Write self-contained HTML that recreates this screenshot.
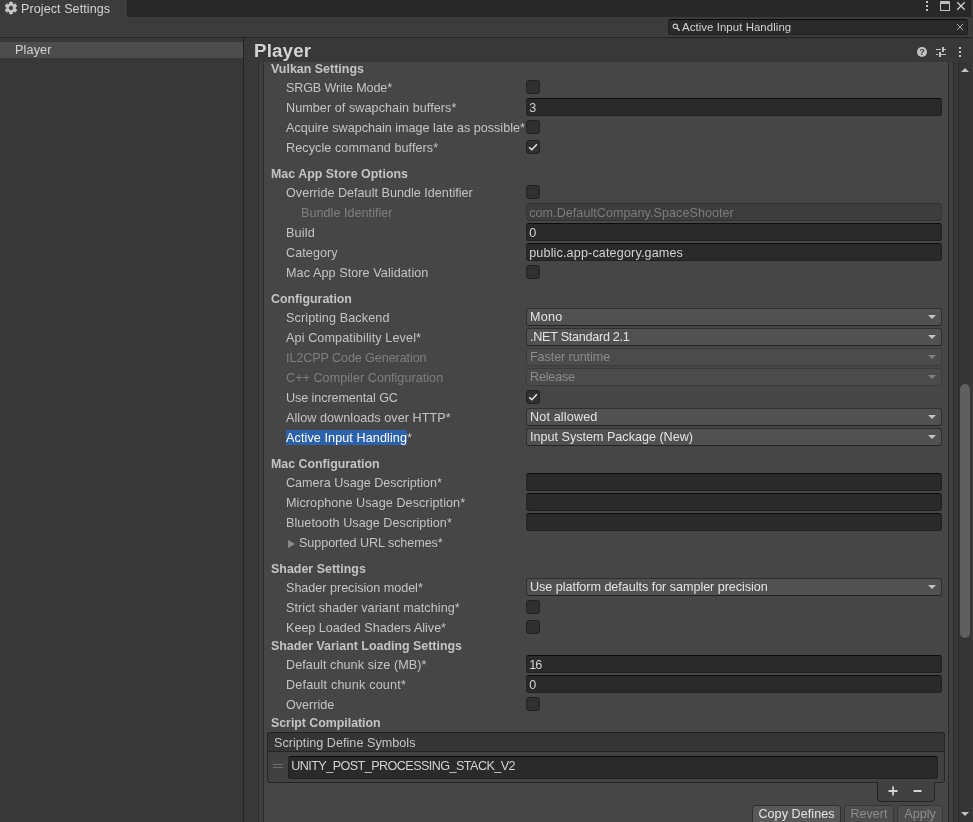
<!DOCTYPE html>
<html><head><meta charset="utf-8"><title>Project Settings</title>
<style>
*{box-sizing:border-box;margin:0;padding:0}
html,body{width:973px;height:822px;overflow:hidden;background:#383838}
#root{position:absolute;left:0;top:0;width:973px;height:822px;overflow:hidden;will-change:transform;font-family:"Liberation Sans",sans-serif;font-size:12.6px;color:#c4c4c4}
div,i{position:absolute;white-space:nowrap}
#tabbar{left:0;top:0;width:973px;height:17px;background:#282828}
#tab{left:0;top:0;width:127px;height:17px;background:#3c3c3c}
#tabtxt{left:21px;top:1px;line-height:17px;color:#d2d2d2}
#toolbar{left:0;top:17px;width:973px;height:20px;background:#3c3c3c}
#tline{left:0;top:37px;width:971px;height:1px;background:#232323}
#search{left:668px;top:19px;width:300px;height:16px;background:#2a2a2a;border:1px solid #212121;border-top-color:#0d0d0d;border-radius:3px}
#stext{left:682px;top:19px;line-height:16px;font-size:11.4px;color:#d2d2d2}
#left{left:0;top:38px;width:243px;height:784px;background:#383838}
#sel{left:0;top:42px;width:243px;height:16px;background:#4d4d4d}
#seltxt{left:15px;top:42px;line-height:16px;color:#d2d2d2}
#split{left:243px;top:38px;width:1px;height:784px;background:#232323}
#title{left:254px;top:39px;line-height:24px;font-size:18.8px;font-weight:bold;color:#d2d2d2}
#box1{left:258px;top:62px;width:696px;height:770px;background:#3f3f3f;border:1px solid #2a2a2a;border-top:none}
#box2{left:263px;top:62px;width:686px;height:770px;background:#464646;border:1px solid #2a2a2a;border-top:none}
#strack{left:958px;top:62px;width:13px;height:760px;background:#353535;border-left:1px solid #303030}
#thumb{left:960px;top:384px;width:10px;height:254px;background:#5f5f5f;border-radius:5px}
#redge{left:971px;top:0;width:2px;height:822px;background:#383838}
.h{left:271px;line-height:18px;font-weight:bold;font-size:12.4px;color:#c4c4c4}
.l{line-height:18px;color:#c4c4c4}
.l.dis{color:#7f7f7f}
.c{left:526px;width:14px;height:14px;background:#303030;border:1px solid #212121;border-radius:3px}
.c svg{position:absolute;left:-1px;top:-1px}
.f{left:526px;width:416px;height:18px;background:#2a2a2a;border:1px solid #212121;border-top-color:#0d0d0d;border-radius:3px;line-height:18px;padding-left:2.2px;color:#d2d2d2}
.d span{position:relative;top:-1px}
.f.dis{background:#3d3d3d;border-color:#343434;color:#7c7c7c}
.d{left:526px;width:416px;height:18px;background:#515151;border:1px solid #303030;border-bottom-color:#242424;border-radius:3px;line-height:18px;padding-left:3px;color:#e4e4e4}
.d.dis{background:#4b4b4b;border-color:#3b3b3b;color:#8b8b8b}
.d i{right:5px;top:6px;width:0;height:0;border-left:4px solid transparent;border-right:4px solid transparent;border-top:4.5px solid #c4c4c4}
.d.dis i{border-top-color:#7f7f7f}
.hl{background:#2c62ab;color:#fff;padding-top:1.4px}
.tri{display:inline-block;position:relative;width:0;height:0;border-top:4.5px solid transparent;border-bottom:4.5px solid transparent;border-left:7.5px solid #8a8a8a;margin:0 4px 0 2px;top:0.5px}
#list{left:267px;top:732px;width:678px;height:51px;background:#414141;border:1px solid #242424;border-radius:3px}
#lhead{left:267px;top:732px;width:678px;height:20px;background:#353535;border:1px solid #242424;border-radius:3px 3px 0 0}
#lheadtxt{left:274px;top:734px;line-height:18px}
#linput{left:288px;top:756px;width:650px;height:23px;background:#2a2a2a;border:1px solid #212121;border-top-color:#0d0d0d;border-radius:3px;line-height:18px;padding-left:2.2px;color:#d2d2d2}
.grip{left:273px;width:10px;height:1px;background:#6e6e6e}
#lfoot{left:877px;top:782px;width:58px;height:20px;background:#414141;border:1px solid #242424;border-top:none;border-radius:0 0 4px 4px}
.dot{width:2px;height:2px;background:#c4c4c4}
.btn{top:805px;height:20px;background:#585858;border:1px solid #303030;border-radius:3px;line-height:17px;text-align:center;color:#e4e4e4}
.btn.dis{background:#4d4d4d;border-color:#383838;color:#8d8d8d}
</style></head><body><div id="root">
<div id="tabbar"></div><div id="tab"></div>
<svg style="position:absolute;left:4px;top:1px" width="14" height="14" viewBox="0 0 14 14"><path fill="#c8c8c8" fill-rule="evenodd" stroke="#c8c8c8" stroke-width="0.6" stroke-linejoin="round" d="M5.41 2.79 L5.55 1.07 L8.45 1.07 L8.59 2.79 L9.85 3.52 L11.41 2.78 L12.86 5.29 L11.44 6.27 L11.44 7.73 L12.86 8.71 L11.41 11.22 L9.85 10.48 L8.59 11.21 L8.45 12.93 L5.55 12.93 L5.41 11.21 L4.15 10.48 L2.59 11.22 L1.14 8.71 L2.56 7.73 L2.56 6.27 L1.14 5.29 L2.59 2.78 L4.15 3.52Z M4.6 7a2.4 2.4 0 1 0 4.8 0a2.4 2.4 0 1 0 -4.8 0z"/></svg>
<div id="tabtxt"><span style="letter-spacing:0.058px">Project Settings</span></div>
<div id="toolbar"></div>
<div id="search"></div><div id="stext"><span style="letter-spacing:0.075px">Active Input Handling</span></div>
<div id="tline"></div>
<div id="left"></div><div id="sel"></div><div id="seltxt"><span style="letter-spacing:0.145px">Player</span></div><div id="split"></div>
<div id="title"><span style="letter-spacing:0.129px">Player</span></div>
<div id="box1"></div><div id="box2"></div>
<div id="strack"></div><div id="thumb"></div>
<div class="h" style="top:60px"><span style="letter-spacing:0.028px">Vulkan Settings</span></div>
<div class="l" style="top:79px;left:286px"><span style="letter-spacing:-0.145px">SRGB Write Mode*</span></div>
<div class="c" style="top:80px"></div>
<div class="l" style="top:99px;left:286px"><span style="letter-spacing:0.070px">Number of swapchain buffers*</span></div>
<div class="f" style="top:98px"><span>3</span></div>
<div class="l" style="top:119px;left:286px"><span style="letter-spacing:0.004px">Acquire swapchain image late as possible*</span></div>
<div class="c" style="top:120px"></div>
<div class="l" style="top:139px;left:286px"><span style="letter-spacing:0.082px">Recycle command buffers*</span></div>
<div class="c" style="top:140px"><svg width="14" height="14" viewBox="0 0 14 14"><path d="M3.2 7.3 L5.8 9.8 L10.9 4.2" fill="none" stroke="#e8e8e8" stroke-width="1.4"/></svg></div>
<div class="h" style="top:165px"><span style="letter-spacing:0.022px">Mac App Store Options</span></div>
<div class="l" style="top:184px;left:286px"><span style="letter-spacing:0.017px">Override Default Bundle Identifier</span></div>
<div class="c" style="top:185px"></div>
<div class="l dis" style="top:204px;left:301px"><span style="letter-spacing:0.034px">Bundle Identifier</span></div>
<div class="f dis" style="top:203px"><span style="letter-spacing:0.037px">com.DefaultCompany.SpaceShooter</span></div>
<div class="l" style="top:224px;left:286px"><span style="letter-spacing:0.197px">Build</span></div>
<div class="f" style="top:223px"><span>0</span></div>
<div class="l" style="top:244px;left:286px"><span style="letter-spacing:0.079px">Category</span></div>
<div class="f" style="top:243px"><span style="letter-spacing:0.144px">public.app-category.games</span></div>
<div class="l" style="top:264px;left:286px"><span style="letter-spacing:0.082px">Mac App Store Validation</span></div>
<div class="c" style="top:265px"></div>
<div class="h" style="top:290px"><span style="letter-spacing:-0.025px">Configuration</span></div>
<div class="l" style="top:309px;left:286px"><span style="letter-spacing:0.120px">Scripting Backend</span></div>
<div class="d" style="top:308px"><span style="letter-spacing:0.253px">Mono</span><i></i></div>
<div class="l" style="top:329px;left:286px"><span style="letter-spacing:0.115px">Api Compatibility Level*</span></div>
<div class="d" style="top:328px"><span style="letter-spacing:-0.265px">.NET Standard 2.1</span><i></i></div>
<div class="l dis" style="top:349px;left:286px"><span style="letter-spacing:-0.097px">IL2CPP Code Generation</span></div>
<div class="d dis" style="top:348px"><span style="letter-spacing:-0.081px">Faster runtime</span><i></i></div>
<div class="l dis" style="top:369px;left:286px"><span style="letter-spacing:0.043px">C++ Compiler Configuration</span></div>
<div class="d dis" style="top:368px"><span style="letter-spacing:-0.187px">Release</span><i></i></div>
<div class="l" style="top:389px;left:286px"><span style="letter-spacing:-0.085px">Use incremental GC</span></div>
<div class="c" style="top:390px"><svg width="14" height="14" viewBox="0 0 14 14"><path d="M3.2 7.3 L5.8 9.8 L10.9 4.2" fill="none" stroke="#e8e8e8" stroke-width="1.4"/></svg></div>
<div class="l" style="top:409px;left:286px"><span style="letter-spacing:0.059px">Allow downloads over HTTP*</span></div>
<div class="d" style="top:408px"><span style="letter-spacing:0.151px">Not allowed</span><i></i></div>
<div class="l" style="top:429px;left:286px"><span style="letter-spacing:0.097px"><span class="hl">Active Input Handling</span>*</span></div>
<div class="d" style="top:428px"><span style="letter-spacing:-0.004px">Input System Package (New)</span><i></i></div>
<div class="h" style="top:455px"><span style="letter-spacing:-0.004px">Mac Configuration</span></div>
<div class="l" style="top:474px;left:286px"><span style="letter-spacing:-0.004px">Camera Usage Description*</span></div>
<div class="f" style="top:473px"></div>
<div class="l" style="top:494px;left:286px"><span style="letter-spacing:0.070px">Microphone Usage Description*</span></div>
<div class="f" style="top:493px"></div>
<div class="l" style="top:514px;left:286px"><span style="letter-spacing:0.047px">Bluetooth Usage Description*</span></div>
<div class="f" style="top:513px"></div>
<div class="l" style="top:534px;left:286px"><b class="tri"></b><span style="letter-spacing:-0.067px">Supported URL schemes*</span></div>
<div class="h" style="top:560px"><span style="letter-spacing:0.033px">Shader Settings</span></div>
<div class="l" style="top:579px;left:286px"><span style="letter-spacing:-0.019px">Shader precision model*</span></div>
<div class="d" style="top:578px"><span style="letter-spacing:-0.037px">Use platform defaults for sampler precision</span><i></i></div>
<div class="l" style="top:599px;left:286px"><span style="letter-spacing:0.075px">Strict shader variant matching*</span></div>
<div class="c" style="top:600px"></div>
<div class="l" style="top:619px;left:286px"><span style="letter-spacing:-0.013px">Keep Loaded Shaders Alive*</span></div>
<div class="c" style="top:620px"></div>
<div class="h" style="top:637px"><span style="letter-spacing:0.009px">Shader Variant Loading Settings</span></div>
<div class="l" style="top:656px;left:286px"><span style="letter-spacing:0.081px">Default chunk size (MB)*</span></div>
<div class="f" style="top:655px"><span style="letter-spacing:-0.877px">16</span></div>
<div class="l" style="top:676px;left:286px"><span style="letter-spacing:0.189px">Default chunk count*</span></div>
<div class="f" style="top:675px"><span>0</span></div>
<div class="l" style="top:696px;left:286px"><span style="letter-spacing:0.000px">Override</span></div>
<div class="c" style="top:697px"></div>
<div class="h" style="top:714px"><span style="letter-spacing:-0.032px">Script Compilation</span></div>
<div id="list"></div><div id="lhead"></div><div id="lheadtxt"><span style="letter-spacing:0.034px">Scripting Define Symbols</span></div>
<div class="grip" style="top:764px"></div><div class="grip" style="top:767px"></div>
<div id="linput"><span style="letter-spacing:-0.557px">UNITY_POST_PROCESSING_STACK_V2</span></div>
<div id="lfoot"></div>
<div class="btn" style="left:752px;width:89px"><span style="letter-spacing:0.051px">Copy Defines</span></div>
<div class="btn dis" style="left:844px;width:50px"><span>Revert</span></div>
<div class="btn dis" style="left:897px;width:46px"><span>Apply</span></div>

<div class="dot" style="left:926px;top:1px"></div><div class="dot" style="left:926px;top:5px"></div><div class="dot" style="left:926px;top:9px"></div>
<div style="left:940px;top:1px;width:10px;height:10px;border:1px solid #c4c4c4;border-top:3px solid #bcbcbc;border-radius:1px"></div>
<svg style="position:absolute;left:956px;top:1px" width="10" height="10" viewBox="0 0 10 10"><path d="M1.2 1.2 L8.8 8.8 M8.8 1.2 L1.2 8.8" stroke="#d2d2d2" stroke-width="1.3" fill="none"/></svg>
<svg style="position:absolute;left:672px;top:23px" width="9" height="9" viewBox="0 0 9 9"><circle cx="3.3" cy="3.3" r="2.2" fill="none" stroke="#c4c4c4" stroke-width="1.2"/><path d="M5 5 L7.6 7.6" stroke="#c4c4c4" stroke-width="1.5"/></svg>
<svg style="position:absolute;left:956px;top:23px" width="8" height="8" viewBox="0 0 8 8"><path d="M1 1 L7 7 M7 1 L1 7" stroke="#b4b4b4" stroke-width="0.9" fill="none"/></svg>
<div style="left:917px;top:47px;width:10px;height:10px;border-radius:5px;background:#c4c4c4;color:#383838;font-weight:bold;font-size:9px;line-height:10px;text-align:center">?</div>
<svg style="position:absolute;left:936px;top:47px" width="10" height="10" viewBox="0 0 10 10" shape-rendering="crispEdges"><path fill="#c4c4c4" d="M0 2h5v1H0zM6 0h2v5H6zM8 2h2v1H8zM0 7h2v1H0zM3 5h2v5H3zM5 7h5v1H5z"/></svg>
<div class="dot" style="left:959px;top:47px"></div><div class="dot" style="left:959px;top:51px"></div><div class="dot" style="left:959px;top:55px"></div>
<div style="left:961px;top:68px;width:0;height:0;border-left:4px solid transparent;border-right:4px solid transparent;border-bottom:4.5px solid #c4c4c4"></div>
<div style="left:961px;top:812px;width:0;height:0;border-left:4px solid transparent;border-right:4px solid transparent;border-top:4.5px solid #c4c4c4"></div>
<svg style="position:absolute;left:887px;top:785px" width="38" height="12" viewBox="0 0 38 12"><path d="M1.5 6h9M6 1.5v9M26.5 6h8" stroke="#d2d2d2" stroke-width="1.8" fill="none"/></svg>

<div id="redge"></div>
</div></body></html>
